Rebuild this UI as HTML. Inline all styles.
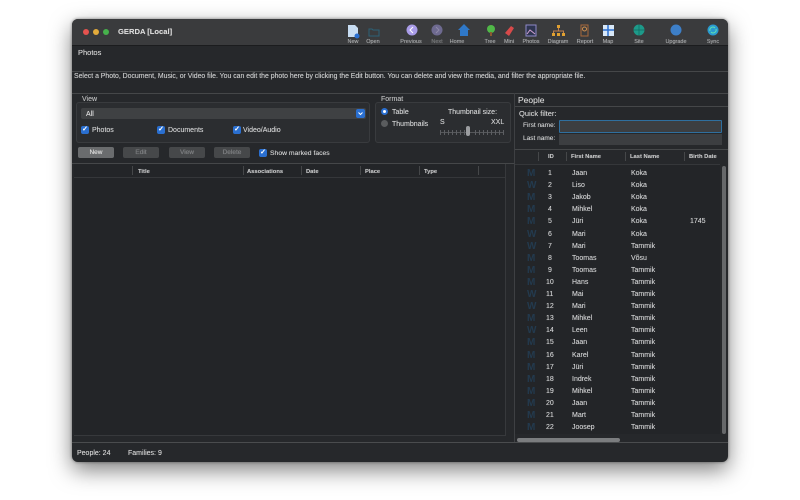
<!DOCTYPE html>
<html><head><meta charset="utf-8"><style>
*{box-sizing:border-box}
html,body{margin:0;padding:0;width:800px;height:500px;overflow:hidden;background:#fff;font-family:"Liberation Sans",sans-serif}
div,span{position:absolute;white-space:nowrap}
#w{left:72px;top:19px;width:656px;height:443px;background:#26282b;border-radius:6px;box-shadow:0 8px 22px rgba(0,0,0,.5),0 0 3px rgba(0,0,0,.45);overflow:hidden;color:#d5d6d7;font-size:7px;line-height:9px;filter:blur(.35px);text-shadow:0 0 .5px rgba(225,225,225,.55)}
.l{height:1px;background:#454749}
.tb{top:20px;font-size:5.5px;line-height:7px;color:#a5a7a9;transform:translateX(-50%)}
.h{color:#c4c5c6;font-size:5.8px;font-weight:bold;top:149px}
.b{top:128px;width:36px;height:11px;border-radius:2px;background:#46484a;color:#75777a;font-size:6.5px;text-align:center;line-height:11px}
.c{width:8px;height:8px;border-radius:2px;background:#2a6fd0;color:#fff;font-size:7px;line-height:8px;text-align:center;font-weight:bold}
.r{height:12px;left:0;width:210px;font-size:7px;line-height:12px;color:#d2d3d4}
.r span{top:0}
.g{left:12px;font-size:10px;color:#233a4e;font-weight:bold;text-shadow:none}
.tick{top:111px;width:1px;height:5px;background:#5c5e62}
</style></head><body>
<div id="w">
<div style="left:0;top:0;width:656px;height:26px;background:#3a3b3d"></div>
<div class="l" style="left:0;top:26px;width:656px;background:#1b1c1e"></div>
<div style="left:11px;top:10px;width:6px;height:6px;border-radius:50%;background:#e5534f"></div>
<div style="left:21px;top:10px;width:6px;height:6px;border-radius:50%;background:#e3ab3b"></div>
<div style="left:31px;top:10px;width:6px;height:6px;border-radius:50%;background:#46b14c"></div>
<div style="left:46px;top:8px;font-size:7.6px;font-weight:bold;line-height:10px;color:#dcdcdc">GERDA [Local]</div>

<svg style="position:absolute;left:0;top:0" width="656" height="26" viewBox="0 0 656 26">
<path d="M276 6h7l3 3v9h-10z" fill="#c7dcf2"/><circle cx="285" cy="17" r="2.5" fill="#2a6fd0"/>
<path d="M297 10h3l1 1h6v6h-10z" fill="none" stroke="#2c6277" stroke-width="1"/>
<circle cx="340" cy="11" r="5.5" fill="#a99ce8"/><path d="M341 8l-3 3 3 3" fill="none" stroke="#fff"/>
<circle cx="365" cy="11" r="5.5" fill="#6e6a90"/><path d="M364 8l3 3-3 3" fill="none" stroke="#8e8aa8"/>
<path d="M386 11l6-6 6 6h-2v6h-8v-6z" fill="#2f78c8"/>
<circle cx="419" cy="10" r="4" fill="#50b848"/><rect x="418" y="13" width="2" height="4" fill="#8a5a30"/>
<path d="M433 14l6-7 3 2-5 8z" fill="#d84a4a"/>
<rect x="454" y="6" width="10" height="11" fill="#2e3550" stroke="#8f88c8"/><path d="M455 15l3-4 5 4" stroke="#d0a0d0" fill="none"/>
<path d="M485 6h3v3h-3zM480 14h3v3h-3zM485 14h3v3h-3zM490 14h3v3h-3z" fill="#e0a030"/><path d="M486.500 9v3M481.500 14v-2h10v2" stroke="#c08050" fill="none"/>
<path d="M509 6h7v11h-7z" fill="none" stroke="#a8683c"/><circle cx="512.500" cy="10" r="2" fill="none" stroke="#d09050"/>
<rect x="531" y="6" width="11" height="11" fill="#d8e8f8"/><path d="M531 11h11M536 6v11" stroke="#2a6fd0" stroke-width="1.500"/>
<circle cx="567" cy="11" r="5.500" fill="#1d9a8a"/><path d="M561.500 11h11M567 5.500v11" stroke="#0f6a60" stroke-width=".7"/>
<circle cx="604" cy="11" r="5.500" fill="#3d7fc8"/>
<circle cx="641" cy="11" r="5.500" fill="#2a9ad0"/><path d="M638 12a3 3 0 0 1 5-3M644 10a3 3 0 0 1-5 3" stroke="#60e0b0" fill="none"/>
</svg>
<div class="tb" style="left:281px">New</div><div class="tb" style="left:301px">Open</div>
<div class="tb" style="left:339px">Previous</div><div class="tb" style="left:365px;color:#6d6f71">Next</div>
<div class="tb" style="left:385px">Home</div><div class="tb" style="left:418px">Tree</div>
<div class="tb" style="left:437px">Mini</div><div class="tb" style="left:459px">Photos</div>
<div class="tb" style="left:486px">Diagram</div><div class="tb" style="left:513px">Report</div>
<div class="tb" style="left:536px">Map</div><div class="tb" style="left:567px">Site</div>
<div class="tb" style="left:604px">Upgrade</div><div class="tb" style="left:641px">Sync</div>

<div style="left:6px;top:29px;font-size:7.5px;color:#d8d8d8">Photos</div>
<div class="l" style="left:0;top:52px;width:656px"></div>
<div style="left:2px;top:53px;font-size:6.9px;line-height:9px;color:#cfd0d1">Select a Photo, Document, Music, or Video file. You can edit the photo here by clicking the Edit button. You can delete and view the media, and filter the appropriate file.</div>
<div class="l" style="left:0;top:74px;width:656px"></div>

<div style="left:4px;top:83px;width:294px;height:41px;background:#2b2d30;border:1px solid #393b3e;border-radius:3px"></div>
<div style="left:10px;top:76px;font-size:7px;color:#bcbdbe">View</div>
<div style="left:9px;top:89px;width:285px;height:11px;background:#3f4143;border-radius:2px"></div>
<div style="left:14px;top:91px;font-size:7px;color:#e0e0e0">All</div>
<div style="left:284px;top:90px;width:9px;height:9px;background:#2a6fd0;border-radius:2px"></div>
<svg style="position:absolute;left:284px;top:90px" width="9" height="9"><path d="M2.500 3.500l2 2 2-2" stroke="#fff" fill="none"/></svg>

<div class="c" style="left:9px;top:107px">✓</div><div style="left:20px;top:107px">Photos</div>
<div class="c" style="left:85px;top:107px">✓</div><div style="left:96px;top:107px">Documents</div>
<div class="c" style="left:161px;top:107px">✓</div><div style="left:171px;top:107px">Video/Audio</div>

<div style="left:303px;top:83px;width:136px;height:41px;background:#2b2d30;border:1px solid #393b3e;border-radius:3px"></div>
<div style="left:309px;top:76px;font-size:7px;color:#bcbdbe">Format</div>
<div style="left:309px;top:89px;width:7px;height:7px;border-radius:50%;background:#2a6fd0;border:2px solid #2a6fd0"></div>
<div style="left:311px;top:91px;width:3px;height:3px;border-radius:50%;background:#fff"></div>
<div style="left:320px;top:89px">Table</div>
<div style="left:309px;top:101px;width:7px;height:7px;border-radius:50%;background:#5a5c5e"></div>
<div style="left:320px;top:101px">Thumbnails</div>
<div style="left:376px;top:89px">Thumbnail size:</div>
<div style="left:368px;top:99px;font-size:7px">S</div>
<div style="left:419px;top:99px;font-size:7px">XXL</div>
<div style="left:368px;top:113px;width:63px;height:1px;background:#55575a"></div>
<div class="tick" style="left:368px"></div><div class="tick" style="left:372px"></div><div class="tick" style="left:376px"></div><div class="tick" style="left:380px"></div><div class="tick" style="left:384px"></div><div class="tick" style="left:388px"></div><div class="tick" style="left:392px"></div><div class="tick" style="left:403px"></div><div class="tick" style="left:407px"></div><div class="tick" style="left:411px"></div><div class="tick" style="left:415px"></div><div class="tick" style="left:419px"></div><div class="tick" style="left:423px"></div><div class="tick" style="left:427px"></div><div class="tick" style="left:431px"></div>
<div style="left:394px;top:107px;width:4px;height:10px;border-radius:2px;background:#9b9da0"></div>

<div class="b" style="left:6px;background:#6a6c6e;color:#e8e8e8">New</div>
<div class="b" style="left:51px">Edit</div><div class="b" style="left:97px">View</div><div class="b" style="left:142px">Delete</div>
<div class="c" style="left:187px;top:130px">✓</div><div style="left:198px;top:130px;font-size:6.8px">Show marked faces</div>

<div class="l" style="left:0;top:144px;width:442px"></div>
<div style="left:2px;top:145px;width:432px;height:271px;background:#232528"></div>
<div class="l" style="left:2px;top:158px;width:432px;background:#35373a"></div>
<div class="h" style="left:66px">Title</div><div class="h" style="left:175px">Associations</div><div class="h" style="left:234px">Date</div><div class="h" style="left:293px">Place</div><div class="h" style="left:352px">Type</div>
<div class="l" style="left:60px;top:147px;width:1px;height:9px"></div><div class="l" style="left:171px;top:147px;width:1px;height:9px"></div><div class="l" style="left:229px;top:147px;width:1px;height:9px"></div><div class="l" style="left:288px;top:147px;width:1px;height:9px"></div><div class="l" style="left:347px;top:147px;width:1px;height:9px"></div><div class="l" style="left:406px;top:147px;width:1px;height:9px"></div>
<div class="l" style="left:433px;top:145px;width:1px;height:271px;background:#37393c"></div>
<div class="l" style="left:2px;top:416px;width:432px;background:#37393c"></div>

<div class="l" style="left:442px;top:74px;width:1px;height:349px;background:#3e4043"></div>
<div style="left:446px;top:76px;font-size:8.5px;line-height:10px;color:#d8d8d8">People</div>
<div class="l" style="left:443px;top:87px;width:213px"></div>
<div style="left:447px;top:90px;font-size:7.5px;color:#d8d8d8">Quick filter:</div>
<div style="left:451px;top:102px;font-size:6.5px">First name:</div>
<div style="left:451px;top:115px;font-size:6.5px">Last name:</div>
<div style="left:487px;top:101px;width:163px;height:13px;background:#3c3e41;border:1.5px solid #2f6f9f;border-radius:1px"></div>
<div style="left:487px;top:115px;width:163px;height:11px;background:#3c3e41"></div>
<div class="l" style="left:443px;top:130px;width:213px"></div>
<div style="left:476px;top:134px;font-size:5.8px;font-weight:bold;color:#c4c5c6">ID</div>
<div style="left:499px;top:134px;font-size:5.8px;font-weight:bold;color:#c4c5c6">First Name</div>
<div style="left:558px;top:134px;font-size:5.8px;font-weight:bold;color:#c4c5c6">Last Name</div>
<div style="left:617px;top:134px;font-size:5.8px;font-weight:bold;color:#c4c5c6">Birth Date</div>
<div class="l" style="left:466px;top:133px;width:1px;height:9px"></div><div class="l" style="left:494px;top:133px;width:1px;height:9px"></div><div class="l" style="left:553px;top:133px;width:1px;height:9px"></div><div class="l" style="left:612px;top:133px;width:1px;height:9px"></div>
<div style="left:443px;top:145px;width:205px;height:270px;background:#232528"></div>
<div class="l" style="left:443px;top:145px;width:205px;background:#35373a"></div>
<div style="left:648px;top:145px;width:8px;height:270px;background:#26282b"></div>
<div style="left:650px;top:147px;width:4px;height:268px;border-radius:2px;background:#66686a"></div>

<div style="left:443px;top:149px;width:205px;height:267px;overflow:hidden">
<div class="r" style="top:0"><span class="g">M</span><span style="left:33px">1</span><span style="left:57px">Jaan</span><span style="left:116px">Koka</span></div>
<div class="r" style="top:12.1px"><span class="g">W</span><span style="left:33px">2</span><span style="left:57px">Liso</span><span style="left:116px">Koka</span></div>
<div class="r" style="top:24.2px"><span class="g">M</span><span style="left:33px">3</span><span style="left:57px">Jakob</span><span style="left:116px">Koka</span></div>
<div class="r" style="top:36.3px"><span class="g">M</span><span style="left:33px">4</span><span style="left:57px">Mihkel</span><span style="left:116px">Koka</span></div>
<div class="r" style="top:48.4px"><span class="g">M</span><span style="left:33px">5</span><span style="left:57px">Jüri</span><span style="left:116px">Koka</span><span style="left:175px">1745</span></div>
<div class="r" style="top:60.5px"><span class="g">W</span><span style="left:33px">6</span><span style="left:57px">Mari</span><span style="left:116px">Koka</span></div>
<div class="r" style="top:72.6px"><span class="g">W</span><span style="left:33px">7</span><span style="left:57px">Mari</span><span style="left:116px">Tammik</span></div>
<div class="r" style="top:84.7px"><span class="g">M</span><span style="left:33px">8</span><span style="left:57px">Toomas</span><span style="left:116px">Võsu</span></div>
<div class="r" style="top:96.8px"><span class="g">M</span><span style="left:33px">9</span><span style="left:57px">Toomas</span><span style="left:116px">Tammik</span></div>
<div class="r" style="top:108.9px"><span class="g">M</span><span style="left:31px">10</span><span style="left:57px">Hans</span><span style="left:116px">Tammik</span></div>
<div class="r" style="top:121px"><span class="g">W</span><span style="left:31px">11</span><span style="left:57px">Mai</span><span style="left:116px">Tammik</span></div>
<div class="r" style="top:133.1px"><span class="g">W</span><span style="left:31px">12</span><span style="left:57px">Mari</span><span style="left:116px">Tammik</span></div>
<div class="r" style="top:145.2px"><span class="g">M</span><span style="left:31px">13</span><span style="left:57px">Mihkel</span><span style="left:116px">Tammik</span></div>
<div class="r" style="top:157.3px"><span class="g">W</span><span style="left:31px">14</span><span style="left:57px">Leen</span><span style="left:116px">Tammik</span></div>
<div class="r" style="top:169.4px"><span class="g">M</span><span style="left:31px">15</span><span style="left:57px">Jaan</span><span style="left:116px">Tammik</span></div>
<div class="r" style="top:181.5px"><span class="g">M</span><span style="left:31px">16</span><span style="left:57px">Karel</span><span style="left:116px">Tammik</span></div>
<div class="r" style="top:193.6px"><span class="g">M</span><span style="left:31px">17</span><span style="left:57px">Jüri</span><span style="left:116px">Tammik</span></div>
<div class="r" style="top:205.7px"><span class="g">M</span><span style="left:31px">18</span><span style="left:57px">Indrek</span><span style="left:116px">Tammik</span></div>
<div class="r" style="top:217.8px"><span class="g">M</span><span style="left:31px">19</span><span style="left:57px">Mihkel</span><span style="left:116px">Tammik</span></div>
<div class="r" style="top:229.9px"><span class="g">M</span><span style="left:31px">20</span><span style="left:57px">Jaan</span><span style="left:116px">Tammik</span></div>
<div class="r" style="top:242px"><span class="g">M</span><span style="left:31px">21</span><span style="left:57px">Mart</span><span style="left:116px">Tammik</span></div>
<div class="r" style="top:254.1px"><span class="g">M</span><span style="left:31px">22</span><span style="left:57px">Joosep</span><span style="left:116px">Tammik</span></div>
</div>
<div style="left:445px;top:419px;width:103px;height:4px;border-radius:2px;background:#7b7d7f"></div>
<div class="l" style="left:0;top:423px;width:656px;background:#4a4c4e"></div>
<div style="left:5px;top:430px;font-size:7px;color:#dcdcdc">People: 24</div>
<div style="left:56px;top:430px;font-size:7px;color:#dcdcdc">Families: 9</div>
</div>
</body></html>
